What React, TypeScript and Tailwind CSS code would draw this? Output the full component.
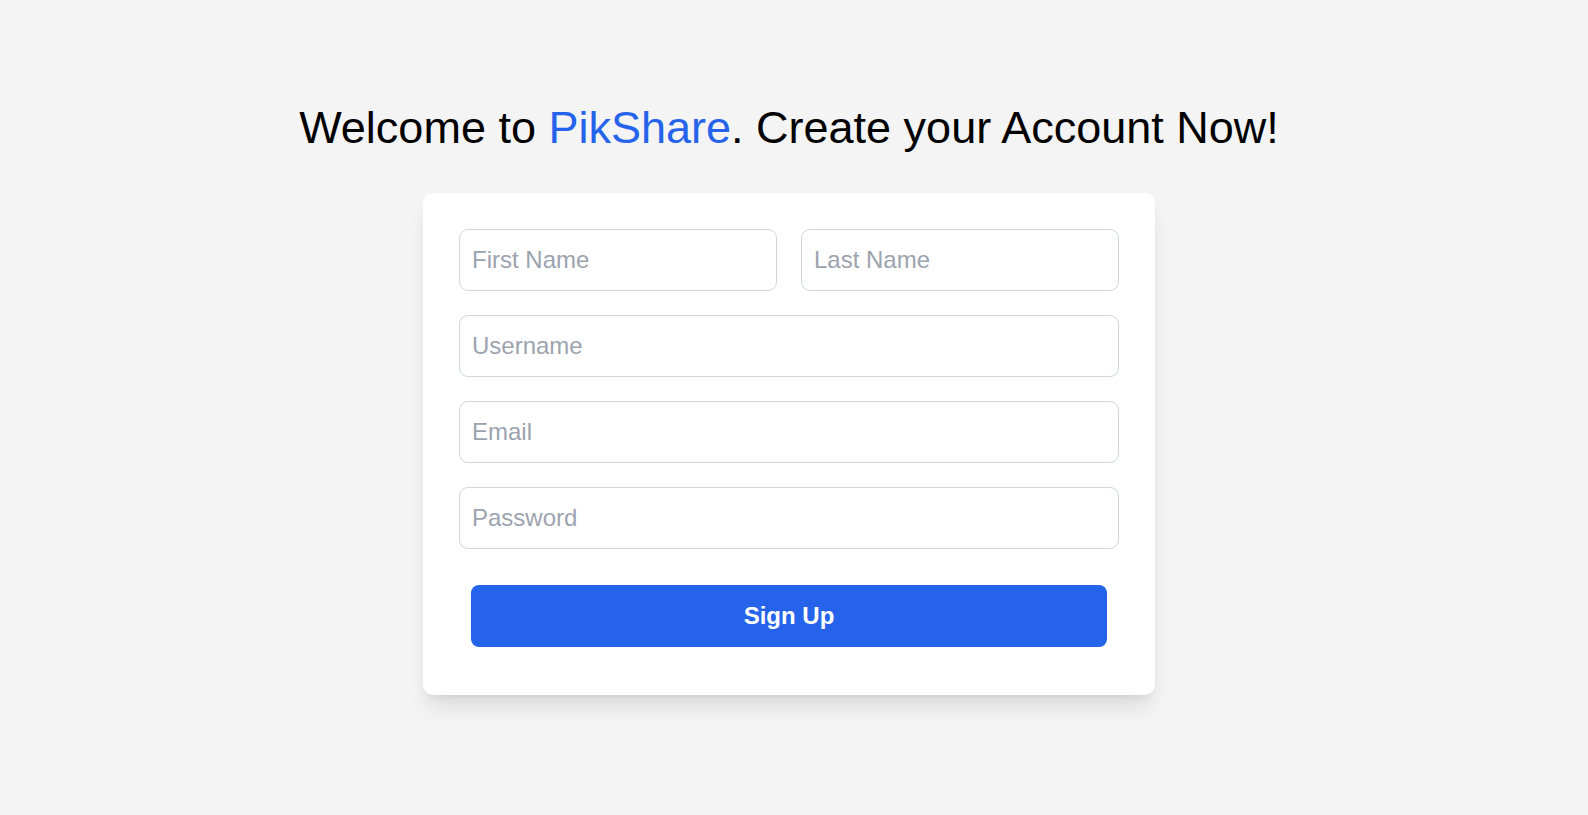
import { useState } from 'react'

export default function App() {
  const [firstName, setFirstName] = useState('')
  const [lastName, setLastName] = useState('')
  const [username, setUsername] = useState('')
  const [email, setEmail] = useState('')
  const [password, setPassword] = useState('')

  const handleSignup = (e: React.FormEvent) => {
    e.preventDefault()
  }

  const inputClass =
    'w-full h-[62px] border border-[#d1d5db] rounded-[9px] px-3 text-[24px] text-black bg-white outline-none placeholder:text-[#9ca3af] focus:border-blue-500'

  return (
    <div className="min-h-screen bg-[#f4f4f4] flex flex-col items-center pt-[101px] pr-[10px] font-['Liberation_Sans',Arial,sans-serif]">
      <h1 className="text-[45px] leading-[54px] text-black mb-[38px]">
        Welcome to <span className="text-[#2563eb]">PikShare</span>. Create your Account Now!
      </h1>

      <form
        onSubmit={handleSignup}
        className="w-[732px] bg-white rounded-[10px] pt-9 px-9 pb-12 shadow-[0_15px_22px_-4px_rgba(0,0,0,0.1),0_6px_9px_-6px_rgba(0,0,0,0.1)] flex flex-col gap-6"
      >
        <div className="flex gap-6">
          <input className={inputClass} placeholder="First Name" value={firstName}
            onChange={(e) => setFirstName(e.target.value)}
          />
          <input className={inputClass} placeholder="Last Name" value={lastName}
            onChange={(e) => setLastName(e.target.value)}
          />
        </div>
        <input className={inputClass} placeholder="Username" value={username}
          onChange={(e) => setUsername(e.target.value)}
        />
        <input className={inputClass} type="email" placeholder="Email" value={email}
          onChange={(e) => setEmail(e.target.value)}
        />
        <input className={inputClass} type="password" placeholder="Password" value={password}
          onChange={(e) => setPassword(e.target.value)}
        />
        <button
          type="submit"
          className="mx-3 mt-3 h-[62px] bg-[#2563eb] text-white text-[24px] font-bold rounded-lg hover:bg-blue-700 transition-colors"
        >
          Sign Up
        </button>
      </form>
    </div>
  )
}
